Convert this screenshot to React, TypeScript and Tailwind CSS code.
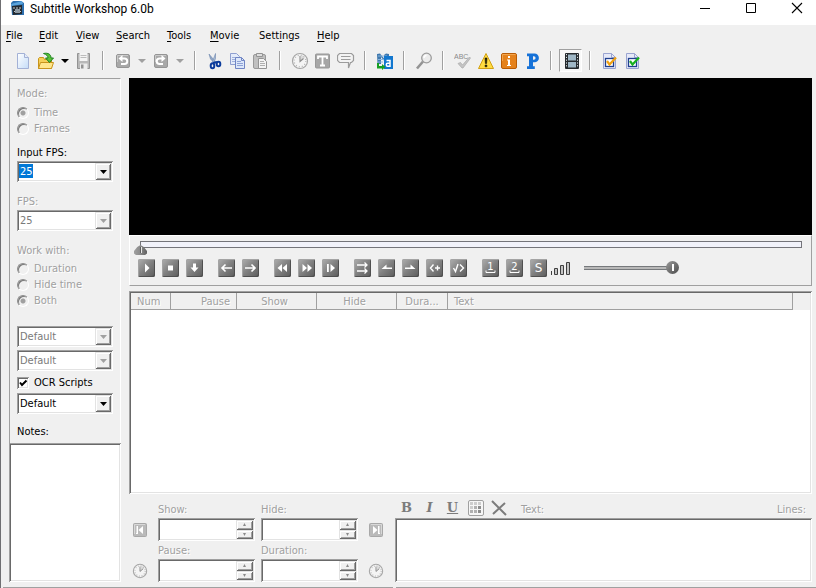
import type { ReactNode } from "react";

const SUNKEN =
  "bg-white shadow-[inset_1px_1px_0_#a0a0a0,inset_-1px_-1px_0_#fff,inset_2px_2px_0_#696969,inset_-2px_-2px_0_#e3e3e3]";
const RAISED =
  "bg-[#f0f0f0] shadow-[inset_1px_1px_0_#e3e3e3,inset_-1px_-1px_0_#696969,inset_2px_2px_0_#fff,inset_-2px_-2px_0_#a0a0a0]";
const DISABLED = "text-[#a0a0a0] [text-shadow:1px_1px_0_#fff]";

/* ---------- Menu ---------- */

const MENUS: [string, string, string, string][] = [
  ["", "F", "ile", "w-[33px]"],
  ["", "E", "dit", "w-[37px]"],
  ["", "V", "iew", "w-[40px]"],
  ["", "S", "earch", "w-[51px]"],
  ["", "T", "ools", "w-[43px]"],
  ["", "M", "ovie", "w-[49px]"],
  ["Sett", "i", "ngs", "w-[58px]"],
  ["", "H", "elp", "w-[40px]"],
];

/* ---------- Toolbar icons ---------- */

function Svg({ w = 18, h = 18, children }: { w?: number; h?: number; children: ReactNode }) {
  return (
    <svg width={w} height={h} viewBox={`0 0 ${w} ${h}`} fill="none" aria-hidden="true">
      {children}
    </svg>
  );
}

const NewIcon = () => (
  <Svg>
    <defs>
      <linearGradient id="page" x1="0" y1="0" x2="1" y2="1">
        <stop offset="0" stopColor="#fff" />
        <stop offset="1" stopColor="#c4dcf8" />
      </linearGradient>
    </defs>
    <path d="M3.500 1.500h7l4 4v11h-11z" fill="url(#page)" stroke="#a3b1d6" />
    <path d="M10.500 1.500v4h4" fill="#e4ecfa" stroke="#a3b1d6" />
  </Svg>
);

const OpenIcon = () => (
  <Svg>
    <path d="M1.500 16.500v-10l1-1h4l1 2h7v9z" fill="#f5cf58" stroke="#c8941c" />
    <path d="M1.500 16.500l2-6h13l-2 6z" fill="#ffe68c" stroke="#c8941c" />
    <path d="M6.500 1.500c5-1 7.500 1 7.500 4.500h2.500l-4 4.500-4-4.500H11c0-2-1.500-3.500-4.500-4.500z" fill="#58c038" stroke="#1e8420" />
  </Svg>
);

const SaveIcon = () => (
  <Svg>
    <path d="M2.500 1.500h12v15h-12z" fill="#b8b8b8" stroke="#939393" />
    <path d="M4.500 1h8v8h-8z" fill="#f4f4f4" />
    <path d="M5.500 3.500h6M5.500 5.500h6" stroke="#bcbcbc" />
    <path d="M5 11.500h7.500V17H5z" fill="#ececec" />
    <path d="M6 12.500h2.500v4H6z" fill="#929292" />
  </Svg>
);

const TurnIcon = ({ flip = false }: { flip?: boolean }) => (
  <Svg>
    <rect x="2.500" y="2.500" width="13" height="13" rx="1.500" fill="#a8a8a8" stroke="#959595" />
    <path d="M3.500 10V3.500H14" stroke="#cacaca" />
    <g transform={flip ? "translate(18 0) scale(-1 1)" : undefined}>
      <path d="M7 6.500h3.500a2.500 2.500 0 0 1 0 5.500H7" stroke="#fff" strokeWidth="2" />
      <path d="M4.500 6.500L8.500 3v7z" fill="#fff" />
    </g>
  </Svg>
);

const CutIcon = () => (
  <Svg>
    <path d="M3 2l1.500 5L9 11.500l1-1z" fill="#8fa6c6" stroke="#6d87ac" strokeWidth=".6" />
    <path d="M9.500 1.500v5l-1.500 4-1.500-1z" fill="#a9bcd6" stroke="#6d87ac" strokeWidth=".6" />
    <ellipse cx="6.500" cy="13.800" rx="1.800" ry="2.500" stroke="#0c3c9c" strokeWidth="2" />
    <ellipse cx="12.500" cy="12" rx="1.800" ry="2.300" stroke="#0c3c9c" strokeWidth="2" />
    <path d="M7 11l4-1" stroke="#0c3c9c" strokeWidth="2" />
  </Svg>
);

const CopyIcon = () => (
  <Svg>
    <path d="M1.500 1.500h6l3 3v8h-9z" fill="#e3ebfa" stroke="#8f9fd0" />
    <path d="M3 5.500h5M3 7.500h5M3 9.500h5" stroke="#9fb0dc" />
    <path d="M6.500 5.500h6l3 3v8h-9z" fill="#dce7fa" stroke="#7085c4" />
    <path d="M12.500 5.500v3h3" stroke="#7085c4" />
    <path d="M8 9.500h4M8 11.500h6M8 13.500h6" stroke="#8fa2d6" />
  </Svg>
);

const PasteIcon = () => (
  <Svg>
    <rect x="1.500" y="2.500" width="12" height="14" rx="1.500" fill="#c0c0c0" stroke="#999" />
    <path d="M4.500 1.500h6v3h-6z" fill="#dedede" stroke="#949494" />
    <path d="M6.500 6.500h5l3 3v7h-8z" fill="#f4f4f4" stroke="#949494" />
    <path d="M8 9.500h4M8 11.500h5M8 13.500h5" stroke="#b0b0b0" />
  </Svg>
);

const ClockIcon = ({ size = 18 }: { size?: number }) => (
  <svg width={size} height={size} viewBox="0 0 18 18" fill="none" aria-hidden="true">
    <circle cx="9" cy="9" r="7.500" fill="#f4f4f4" stroke="#a6a6a6" strokeWidth="1.200" />
    <path d="M9 9L10.500 3A6 6 0 0 1 14 6z" fill="#dadada" />
    <circle cx="9" cy="9" r="5.800" stroke="#b4b4b4" strokeWidth="1.200" strokeDasharray="1 2.037" />
    <path d="M9 4V9.500L12.500 6.500" stroke="#8c8c8c" strokeWidth="1.100" />
  </svg>
);

const TextIcon = () => (
  <Svg>
    <rect x="1.500" y="2" width="14" height="14" rx="1" fill="#a6a6a6" stroke="#989898" />
    <path d="M4 7V4.500h9V7M8.500 4.500v9M6 13.500h5" stroke="#fff" strokeWidth="1.800" />
  </Svg>
);

const SpeechIcon = () => (
  <Svg>
    <path d="M2.500 1.500h12l2 2v5l-2 2h-1l-2 5.500v-5.500h-9l-2-2v-5z" fill="#f3f3f3" stroke="#9c9c9c" strokeWidth="1.200" />
    <path d="M4 4.500h9.500M4 7.500h9.500" stroke="#9c9c9c" strokeWidth="1.200" />
  </Svg>
);

const TranslateIcon = () => (
  <Svg>
    <path d="M1 2l3-.5 4 5V3l2-1.500 3 .5v8l-3 1-5-6v7H1.500z" fill="#3f78ae" />
    <path d="M2 4h9M2 7.500h8M2 10h5" stroke="#8ab5dc" />
    <rect x="8" y="4" width="9" height="13" fill="#1277cf" />
    <path d="M10.500 8.500h3.500v6.500M14 11.200H11.500q-1.200 0-1.200 1.500t1.200 1.500h2" stroke="#fff" strokeWidth="1.500" />
    <path d="M1 11h2v3h3v-2l3.500 3L6 18v-1.500H1z" fill="#17a022" />
  </Svg>
);

const LoupeIcon = () => (
  <Svg>
    <path d="M2 16.500l6-7" stroke="#949494" strokeWidth="2.600" />
    <circle cx="11.500" cy="6" r="4.800" fill="#ececec" stroke="#9c9c9c" strokeWidth="1.300" />
    <path d="M9 6a2.500 2.500 0 0 1 2.500-2.500" stroke="#fff" strokeWidth="1.300" />
  </Svg>
);

const SpellIcon = () => (
  <Svg>
    <text x="0" y="7" fontSize="7" fontFamily="Liberation Sans, sans-serif" fill="#8a8a8a">ABC</text>
    <path d="M4 11.500l2.500-1 2 2.500 7-8 1 1-7.500 10H8z" fill="#c4c4c4" stroke="#aaa" strokeWidth=".7" />
  </Svg>
);

const WarnIcon = () => (
  <Svg>
    <path d="M9 1.500l7.500 15h-15z" fill="#ffdc40" stroke="#d2a013" strokeLinejoin="round" />
    <path d="M8 6h2l-.4 5.500H8.400zM8.100 13h1.800v1.800H8.100z" fill="#221c00" stroke="#221c00" strokeWidth=".6" />
  </Svg>
);

const InfoIcon = () => (
  <Svg>
    <rect x="1.500" y="1.500" width="15" height="15" rx="1.500" fill="#e5821c" stroke="#b95c05" />
    <path d="M2.500 9V2.500H15.500" stroke="#f4a54d" />
    <path d="M8 4h2v2H8zM7 7.500h3v5.500h1v1H7v-1h1V8.500H7z" fill="#fff" />
  </Svg>
);

const PascalIcon = () => (
  <Svg>
    <path d="M4 1.500h7.500a4.300 4.300 0 0 1 0 8.800H10v4h1.800V17H4v-2.700h2V4.200H4zM10 4.200v3.600h.8a1.800 1.800 0 0 0 0-3.600z" fill="#1672d8" fillRule="evenodd" />
  </Svg>
);

const FilmIcon = () => (
  <Svg>
    <rect x="3" y="1" width="14" height="16" rx="1" fill="#262b2f" />
    <path d="M6 2.500h8v6H6zM6 10h8v5.500H6z" fill="#9fb7c6" />
    <path d="M4.500 2v14M15.500 2v14" stroke="#dfe5e8" strokeDasharray="1.200 1.600" />
  </Svg>
);

const DocCheckIcon = ({ tone }: { tone: string }) => (
  <Svg>
    <path d="M2.500 1.500h8l4 4v11h-12z" fill="#e6e9f8" stroke="#9aa4d0" />
    <path d="M10.500 1.500v4h4" stroke="#9aa4d0" />
    <rect x="4.500" y="6.500" width="8" height="8" fill="#fff" stroke="#1f3f8f" strokeWidth="1.300" />
    <path d="M6 9l2.500 3.500L15 5.500" stroke={tone} strokeWidth="2.200" />
  </Svg>
);

function Tool({ label, children }: { label: string; children: ReactNode }) {
  return (
    <button aria-label={label} className="flex h-6 w-[23px] items-center justify-center">
      {children}
    </button>
  );
}

function Drop({ label, off = false }: { label: string; off?: boolean }) {
  return (
    <button aria-label={label} className="flex h-6 w-[15px] items-center justify-center">
      <Svg w={8} h={4}>
        <path d="M0 0h8L4 4z" fill={off ? "#a0a0a0" : "#000"} />
      </Svg>
    </button>
  );
}

const Sep = () => (
  <span className="flex w-4 justify-center">
    <span className="h-[19px] w-0.5 border-r border-l border-r-white border-l-[#a0a0a0]" />
  </span>
);

/* ---------- Form parts ---------- */

function Combo({ label, value, off = false, marked = false }: { label: string; value: string; off?: boolean; marked?: boolean }) {
  return (
    <div className={`relative flex h-[21px] ${SUNKEN}`}>
      <select
        aria-label={label}
        disabled={off}
        className={`w-full appearance-none pt-px pl-[3px] leading-4 opacity-100 outline-none ${off ? "text-[#7a7a7a]" : ""} ${
          marked ? "bg-[linear-gradient(#0078d7,#0078d7)] bg-[length:14px_14px] bg-[position:2px_3px] bg-no-repeat text-white" : ""
        }`}
      >
        <option>{value}</option>
      </select>
      <span className={`pointer-events-none absolute inset-y-0.5 right-0.5 flex w-4 items-center justify-center ${RAISED}`}>
        <Svg w={7} h={4}>
          <path d="M0 0h7L3.500 4z" fill={off ? "#a0a0a0" : "#000"} />
        </Svg>
      </span>
    </div>
  );
}

function Radio({ group, label, on = false }: { group: string; label: string; on?: boolean }) {
  return (
    <label className={`flex h-4 items-center gap-[5px] ${DISABLED}`}>
      <input
        type="radio"
        name={group}
        disabled
        defaultChecked={on}
        className="size-3 appearance-none rounded-full border border-t-[#8c8c8c] border-r-white border-b-white border-l-[#8c8c8c] bg-[#f0f0f0] shadow-[inset_1px_1px_0_#787878] checked:bg-[radial-gradient(circle,#a0a0a0_2px,transparent_3px)]"
      />
      {label}
    </label>
  );
}

function Spin({ id }: { id: string }) {
  const btn = `flex h-[9px] grow items-center justify-center ${RAISED}`;
  return (
    <div className={`flex h-[23px] p-0.5 ${SUNKEN}`}>
      <input id={id} type="text" disabled className="w-0 grow px-1 outline-none" />
      <div className="flex w-[17px] flex-col">
        <button aria-label={`${id} up`} className={btn}>
          <Svg w={5} h={3}><path d="M1 3h3L2.500 0z" fill="#8a8a8a" /></Svg>
        </button>
        <button aria-label={`${id} down`} className={btn}>
          <Svg w={5} h={3}><path d="M1 0h3L2.500 3z" fill="#8a8a8a" /></Svg>
        </button>
      </div>
    </div>
  );
}

const JumpIcon = ({ flip = false }: { flip?: boolean }) => (
  <Svg w={16} h={16}>
    <g transform={flip ? "translate(16 0) scale(-1 1)" : undefined}>
      <rect x="1.500" y="1.500" width="13" height="13" rx="1" fill="#bababa" stroke="#a8a8a8" />
      <path d="M2.500 12V2.500H13" stroke="#d8d8d8" />
      <path d="M4.500 4h1.500v8H4v-1h.5M11 4v8L6.500 8z" fill="#fff" />
    </g>
  </Svg>
);

/* ---------- Player ---------- */

const W = { stroke: "#fff", strokeWidth: 1.6 } as const;

const PLAYER: { label: string; icon: ReactNode }[][] = [
  [
    { label: "Play", icon: <path d="M7 4.500v9l4.500-4.500z" fill="#fff" /> },
    { label: "Stop", icon: <path d="M6 6.500h5v5H6z" fill="#fff" /> },
    { label: "Scroll list", icon: <path d="M7 4.500h3v4h2.500l-4 4.500-4-4.500H7z" fill="#fff" /> },
  ],
  [
    { label: "Previous subtitle", icon: <path d="M14 9H4M7.500 5.500L4 9l3.500 3.500" {...W} /> },
    { label: "Next subtitle", icon: <path d="M3 9h10M9.500 5.500L13 9l-3.500 3.500" {...W} /> },
  ],
  [
    { label: "Rewind", icon: <path d="M8 5v8L3.500 9zM13 5v8L8.500 9z" fill="#fff" /> },
    { label: "Forward", icon: <path d="M4.500 5v8L9 9zM9.500 5v8L14 9z" fill="#fff" /> },
    { label: "Playback rate", icon: <path d="M5 5h1.800v8H5zM8.500 5v8L13 9z" fill="#fff" /> },
  ],
  [
    { label: "Move subtitle", icon: <path d="M3 6h10M3 12h10M10.500 3.500L13 6l-2.500 2.500M10.500 9.500L13 12l-2.500 2.500" {...W} strokeWidth={1.3} /> },
    { label: "Set start time", icon: <path d="M3.500 10L8.500 5.500v3H14V10z" fill="#fff" /> },
    { label: "Set final time", icon: <path d="M13.500 10L8.500 5.500v3H3V10z" fill="#fff" /> },
    { label: "Start subtitle", icon: <path d="M7.500 5.500L4.500 9l3 3.500M9 9h5M11.500 6.500v5" {...W} strokeWidth={1.4} /> },
    { label: "End subtitle", icon: <path d="M3.500 9l2 3.500L8 5M10 5.500L13.500 9 10 12.500" {...W} strokeWidth={1.4} /> },
  ],
  [
    { label: "First sync point", icon: <><path d="M4 11.500v2h9v-2" {...W} strokeWidth={1} /><text x="8.500" y="11" textAnchor="middle" fontSize="10" fontFamily="DejaVu Sans, sans-serif" fill="#fff">1</text></> },
    { label: "Last sync point", icon: <><path d="M4 11.500v2h9v-2" {...W} strokeWidth={1} /><text x="8.500" y="11" textAnchor="middle" fontSize="10" fontFamily="DejaVu Sans, sans-serif" fill="#fff">2</text></> },
    { label: "Add sync point", icon: <text x="8.500" y="13" textAnchor="middle" fontSize="12" fontFamily="DejaVu Sans, sans-serif" fill="#fff">S</text> },
  ],
];

const COLUMNS: [string, string][] = [
  ["Num", "w-[40px] pl-[6px] text-left"],
  ["Pause", "w-[66px] pr-[6px] text-right"],
  ["Show", "w-[80px] pr-1 text-center"],
  ["Hide", "w-[80px] pr-1 text-center"],
  ["Dura...", "w-[51px] text-center"],
  ["Text", "pl-[6px] text-left"],
];

export default function App() {
  return (
    <div className="flex h-screen min-h-[580px] flex-col border-l border-[#6f6f72] bg-[#f0f0f0] font-['DejaVu_Sans_Condensed','DejaVu_Sans',sans-serif] text-[11px] leading-4 text-black">
      <header className="flex h-[25px] items-start bg-white">
        <span className="pl-2">
          <Svg w={16} h={16}>
            <path d="M2 3l2-2h8l3 2v12H3z" fill="#2d6fae" />
            <path d="M2 4l11-3 1 3-11 2z" fill="#5aa4dd" />
            <path d="M3 6l10-1v9l-9 1z" fill="#242a30" />
            <path d="M4 8h9M5 11.500h7" stroke="#c4ccd2" strokeDasharray="2 1" />
            <path d="M6 9h5v4H6z" fill="#8b98a2" />
          </Svg>
        </span>
        <h1 className="grow pl-[5px] font-[Roboto,'Noto_Sans',sans-serif] text-[12px] leading-[18px]">Subtitle Workshop 6.0b</h1>
        <div className="flex gap-2">
          <button aria-label="Minimize" className="flex h-4 w-[38px] items-center justify-center">
            <Svg w={12} h={12}><path d="M1 6.500h10" stroke="#000" /></Svg>
          </button>
          <button aria-label="Maximize" className="flex h-4 w-[38px] items-center justify-center">
            <Svg w={12} h={12}><path d="M1.500 1.500h9v9h-9z" stroke="#000" /></Svg>
          </button>
          <button aria-label="Close" className="flex h-4 w-[38px] items-center justify-center">
            <Svg w={12} h={12}><path d="M1 1l10 10M11 1L1 11" stroke="#000" strokeWidth="1.100" /></Svg>
          </button>
        </div>
      </header>

      <nav className="flex h-[22px] items-center pl-[5px]">
        {MENUS.map(([pre, key, post, width]) => (
          <button key={post} className={`text-left ${width}`}>
            {pre}
            <span className="underline underline-offset-2">{key}</span>
            {post}
          </button>
        ))}
      </nav>

      <div className="flex h-[31px] items-center pb-1 pl-[10px]">
        <Tool label="New"><NewIcon /></Tool>
        <Tool label="Open"><OpenIcon /></Tool>
        <Drop label="Recent files" />
        <Tool label="Save"><SaveIcon /></Tool>
        <Sep />
        <Tool label="Undo"><TurnIcon /></Tool>
        <Drop label="Undo list" off />
        <Tool label="Redo"><TurnIcon flip /></Tool>
        <Drop label="Redo list" off />
        <Sep />
        <Tool label="Cut"><CutIcon /></Tool>
        <Tool label="Copy"><CopyIcon /></Tool>
        <Tool label="Paste"><PasteIcon /></Tool>
        <Sep />
        <Tool label="Timings"><ClockIcon /></Tool>
        <Tool label="Texts"><TextIcon /></Tool>
        <Tool label="Comments"><SpeechIcon /></Tool>
        <Sep />
        <Tool label="Translator mode"><TranslateIcon /></Tool>
        <Sep />
        <Tool label="Find"><LoupeIcon /></Tool>
        <Sep />
        <Tool label="Spell check"><SpellIcon /></Tool>
        <Tool label="Warnings"><WarnIcon /></Tool>
        <Tool label="Information"><InfoIcon /></Tool>
        <Tool label="Pascal scripts"><PascalIcon /></Tool>
        <Sep />
        <button
          aria-label="Video preview"
          aria-pressed="true"
          className="flex h-[23px] w-[23px] items-center justify-center border border-t-[#a0a0a0] border-r-white border-b-white border-l-[#a0a0a0] bg-[#f8f8f8]"
        >
          <FilmIcon />
        </button>
        <Sep />
        <Tool label="OCR check"><DocCheckIcon tone="#f0a010" /></Tool>
        <Tool label="Error check"><DocCheckIcon tone="#18b020" /></Tool>
      </div>

      <div className="flex min-h-0 grow gap-2 pr-1 pb-[5px] pl-2">
        <aside className="flex w-[112px] shrink-0 flex-col border-t border-r border-l border-t-[#a0a0a0] border-r-white border-l-[#a0a0a0]">
          <div className="flex flex-col px-[7px] pt-[7px]">
            <span className={DISABLED}>Mode:</span>
            <div className="mt-[3px] flex flex-col">
              <Radio group="mode" label="Time" on />
              <Radio group="mode" label="Frames" />
            </div>
            <span className="mt-2">Input FPS:</span>
            <Combo label="Input FPS" value="25" marked />
            <span className={`mt-3 ${DISABLED}`}>FPS:</span>
            <Combo label="FPS" value="25" off />
            <span className={`mt-3 ${DISABLED}`}>Work with:</span>
            <div className="mt-0.5 mb-[17px] flex flex-col">
              <Radio group="work" label="Duration" />
              <Radio group="work" label="Hide time" />
              <Radio group="work" label="Both" on />
            </div>
            <div className="flex flex-col gap-[3px]">
              <Combo label="Original charset" value="Default" off />
              <Combo label="Translated charset" value="Default" off />
              <label className="flex h-4 items-center gap-[5px] pt-px">
                <span className="grid">
                  <input
                    type="checkbox"
                    defaultChecked
                    className={`peer col-start-1 row-start-1 size-3 appearance-none ${SUNKEN}`}
                  />
                  <svg width="12" height="12" viewBox="0 0 12 12" fill="none" aria-hidden="true" className="pointer-events-none invisible col-start-1 row-start-1 peer-checked:visible">
                    <path d="M3 5.500l2 2.500 4.500-4.500" stroke="#000" strokeWidth="2" />
                  </svg>
                </span>
                OCR Scripts
              </label>
              <Combo label="OCR script" value="Default" />
            </div>
            <label htmlFor="notes" className="mt-[10px] mb-[3px]">Notes:</label>
          </div>
          <textarea id="notes" className={`-mx-px min-h-0 grow resize-none p-1 outline-none ${SUNKEN}`} />
        </aside>

        <main className="flex min-w-0 grow flex-col">
          <div className="h-[157px] shrink-0 bg-black" />

          <section className="border border-t-white border-r-[#a0a0a0] border-b-[#a0a0a0] border-l-white pt-[5px] pb-2">
            <div className="mr-[3px] ml-1 grid">
              <div className="col-start-1 row-start-1 mx-[6px] h-[7px] border border-[#74747a] bg-[#f1f2fa]" />
              <input
                type="range"
                aria-label="Seek"
                defaultValue={0}
                className="relative col-start-1 row-start-1 h-[14px] w-full appearance-none bg-transparent [&::-webkit-slider-runnable-track]:h-[14px] [&::-webkit-slider-thumb]:mt-1 [&::-webkit-slider-thumb]:h-[10px] [&::-webkit-slider-thumb]:w-[13px] [&::-webkit-slider-thumb]:appearance-none [&::-webkit-slider-thumb]:bg-[linear-gradient(90deg,#606060_1px,#e8e8e8_1px),linear-gradient(90deg,#a0a0a0,#8a8a8a_50%,#606060)] [&::-webkit-slider-thumb]:bg-[length:2px_6px,100%_100%] [&::-webkit-slider-thumb]:bg-center [&::-webkit-slider-thumb]:bg-no-repeat [&::-webkit-slider-thumb]:[clip-path:polygon(50%_0,75%_20%,100%_60%,100%_85%,85%_100%,15%_100%,0_85%,0_60%,25%_20%)]"
              />
            </div>
            <div className="mt-1 flex items-center pl-2">
              <div className="flex gap-[15px]">
                {PLAYER.map((group) => (
                  <div key={group[0].label} className="flex gap-[7px]">
                    {group.map((b) => (
                      <button
                        key={b.label}
                        aria-label={b.label}
                        className="h-[18px] w-[17px] rounded-[2px] bg-linear-to-br from-[#b0b0b0] via-[#808080] to-[#5c5c5c] shadow-[inset_1px_1px_0_#a4a4a4,inset_-1px_-1px_0_#505050]"
                      >
                        <Svg w={17} h={18}>{b.icon}</Svg>
                      </button>
                    ))}
                  </div>
                ))}
              </div>
              <span className="ml-1">
                <Svg w={20} h={16}>
                  <path d="M.5 11v4" stroke="#404040" />
                  <path d="M3.500 8.500h3v6h-3zM9.500 5.500h3v9h-3zM15.500 2.500h3v12h-3z" fill="#c4c4c4" stroke="#404040" />
                </Svg>
              </span>
              <input
                type="range"
                aria-label="Volume"
                defaultValue={100}
                className="ml-[13px] h-[13px] w-[95px] appearance-none bg-transparent [&::-webkit-slider-runnable-track]:h-1 [&::-webkit-slider-runnable-track]:bg-[linear-gradient(#76797c_1px,#b8b8b8_1px,#b8b8b8_3px,#76797c_3px)] [&::-webkit-slider-runnable-track]:bg-[length:88px_4px] [&::-webkit-slider-runnable-track]:bg-no-repeat [&::-webkit-slider-thumb]:-mt-[5px] [&::-webkit-slider-thumb]:size-[13px] [&::-webkit-slider-thumb]:appearance-none [&::-webkit-slider-thumb]:rounded-full [&::-webkit-slider-thumb]:bg-[linear-gradient(#fff,#fff),linear-gradient(135deg,#9a9a9a,#4c4c4c)] [&::-webkit-slider-thumb]:bg-[length:2px_7px,100%_100%] [&::-webkit-slider-thumb]:bg-center [&::-webkit-slider-thumb]:bg-no-repeat"
              />
            </div>
          </section>

          <section className={`mt-[5px] min-h-0 grow p-0.5 ${SUNKEN}`}>
            <table className="w-full table-fixed border-separate border-spacing-0">
              <thead>
                <tr>
                  {COLUMNS.map(([name, cls]) => (
                    <th
                      key={name}
                      scope="col"
                      className={`h-[17px] border-r border-b border-[#a0a0a0] bg-[#f0f0f0] pt-px leading-[15px] font-normal whitespace-nowrap ${DISABLED} ${cls}`}
                    >
                      {name}
                    </th>
                  ))}
                  <td className="w-[17px] bg-[#f0f0f0]" />
                </tr>
              </thead>
            </table>
          </section>

          <section className="flex gap-[6px] pt-[6px]">
            <div className={`grid grid-cols-[23px_97px_97px_25px] grid-rows-[18px_23px_18px_23px] items-end gap-x-[6px] ${DISABLED}`}>
              <label htmlFor="show" className="col-start-2">Show:</label>
              <label htmlFor="hide">Hide:</label>
              <button aria-label="Previous" className="col-start-1 flex h-full items-center pl-[3px]"><JumpIcon /></button>
              <Spin id="show" />
              <Spin id="hide" />
              <button aria-label="Next" className="flex h-full items-center pl-1"><JumpIcon flip /></button>
              <label htmlFor="pause" className="col-start-2">Pause:</label>
              <label htmlFor="duration">Duration:</label>
              <button aria-label="Set pause" className="col-start-1 flex h-full items-center pl-[3px]"><ClockIcon size={16} /></button>
              <Spin id="pause" />
              <Spin id="duration" />
              <button aria-label="Set duration" className="flex h-full items-center pl-1"><ClockIcon size={16} /></button>
            </div>
            <div className="flex min-w-0 grow flex-col">
              <div className={`flex h-[18px] items-end pr-[6px] ${DISABLED}`}>
                <div className="mb-0.5 flex items-center font-['DejaVu_Serif',serif] text-[13px] text-[#7c7c7c]">
                  <button aria-label="Bold" className="w-[23px] text-center font-bold">B</button>
                  <button aria-label="Italic" className="w-[23px] text-center font-bold italic">I</button>
                  <button aria-label="Underline" className="w-[23px] text-center font-bold underline">U</button>
                  <button aria-label="Colour" className="flex w-[23px] items-center justify-center">
                    <Svg w={16} h={16}>
                      <rect x=".5" y=".5" width="15" height="15" rx="1.500" fill="#f6f6f6" stroke="#a0a0a0" />
                      <path d="M2 3.500h3M2 7.500h3M6 3.500h3M10 3.500h3" stroke="#cdcdcd" strokeWidth="3" />
                      <path d="M6 7.500h3M2 11.500h3M6 11.500h3" stroke="#b0b0b0" strokeWidth="3" />
                      <path d="M10 7.500h3M10 11.500h3" stroke="#8c8c8c" strokeWidth="3" />
                    </Svg>
                  </button>
                  <button aria-label="Clear format" className="flex w-[23px] items-center justify-center">
                    <Svg w={16} h={16}>
                      <path d="M1 1l14 14M14 3L2 14" stroke="#7c7c7c" strokeWidth="2" />
                    </Svg>
                  </button>
                </div>
                <label htmlFor="text" className="grow pl-[11px]">Text:</label>
                <span>Lines:</span>
              </div>
              <textarea id="text" disabled className={`min-h-0 grow resize-none p-1 outline-none ${SUNKEN}`} />
            </div>
          </section>
        </main>
      </div>
      <footer className="flex h-px shrink-0 gap-[3px] pl-0.5">
        <div className="w-[390px] bg-[#a0a0a0]" />
        <div className="grow bg-[#a0a0a0]" />
      </footer>
    </div>
  );
}
